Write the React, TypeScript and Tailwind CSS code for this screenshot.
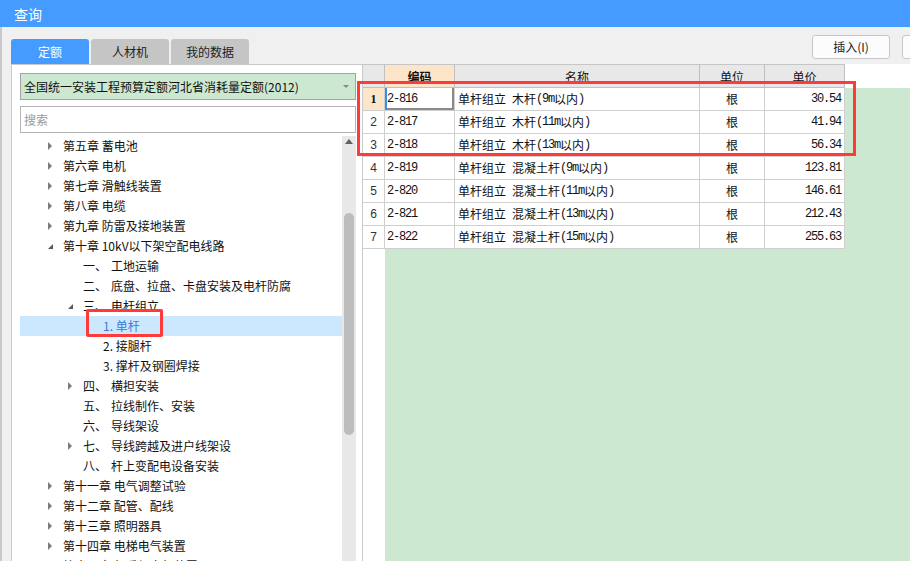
import React from "react";

type Node = { lvl: 0 | 1 | 2; arrow?: "r" | "d"; num?: string; text: string; sel?: boolean };

const tree: Node[] = [
  { lvl: 0, arrow: "r", text: "第五章 蓄电池" },
  { lvl: 0, arrow: "r", text: "第六章 电机" },
  { lvl: 0, arrow: "r", text: "第七章 滑触线装置" },
  { lvl: 0, arrow: "r", text: "第八章 电缆" },
  { lvl: 0, arrow: "r", text: "第九章 防雷及接地装置" },
  { lvl: 0, arrow: "d", text: "第十章 10kV以下架空配电线路" },
  { lvl: 1, num: "一、", text: "工地运输" },
  { lvl: 1, num: "二、", text: "底盘、拉盘、卡盘安装及电杆防腐" },
  { lvl: 1, arrow: "d", num: "三、", text: "电杆组立" },
  { lvl: 2, text: "1. 单杆", sel: true },
  { lvl: 2, text: "2. 接腿杆" },
  { lvl: 2, text: "3. 撑杆及钢圈焊接" },
  { lvl: 1, arrow: "r", num: "四、", text: "横担安装" },
  { lvl: 1, num: "五、", text: "拉线制作、安装" },
  { lvl: 1, num: "六、", text: "导线架设" },
  { lvl: 1, arrow: "r", num: "七、", text: "导线跨越及进户线架设" },
  { lvl: 1, num: "八、", text: "杆上变配电设备安装" },
  { lvl: 0, arrow: "r", text: "第十一章 电气调整试验" },
  { lvl: 0, arrow: "r", text: "第十二章 配管、配线" },
  { lvl: 0, arrow: "r", text: "第十三章 照明器具" },
  { lvl: 0, arrow: "r", text: "第十四章 电梯电气装置" },
  { lvl: 0, arrow: "r", text: "第十五章 起重机电气装置" },
];

const indent: Record<number, string> = { 0: "pl-[28px]", 1: "pl-[48px]", 2: "pl-[68px]" };

const rows = [
  { code: "2-816", name: "单杆组立 木杆(9m以内)", unit: "根", price: "30.54" },
  { code: "2-817", name: "单杆组立 木杆(11m以内)", unit: "根", price: "41.94" },
  { code: "2-818", name: "单杆组立 木杆(13m以内)", unit: "根", price: "56.34" },
  { code: "2-819", name: "单杆组立 混凝土杆(9m以内)", unit: "根", price: "123.81" },
  { code: "2-820", name: "单杆组立 混凝土杆(11m以内)", unit: "根", price: "146.61" },
  { code: "2-821", name: "单杆组立 混凝土杆(13m以内)", unit: "根", price: "212.43" },
  { code: "2-822", name: "单杆组立 混凝土杆(15m以内)", unit: "根", price: "255.63" },
];

function Mixed({ text }: { text: string }) {
  const parts = text.split(/([\u3400-\u9fff]+)/).filter(Boolean);
  return (
    <>
      {parts.map((p, i) =>
        /[\u3400-\u9fff]/.test(p) ? (
          <span key={i} className="text-[12px] font-['Noto_Sans_CJK_SC',sans-serif]">
            {p}
          </span>
        ) : (
          <span key={i} className="text-[12px] tracking-[-1.2px] font-['Liberation_Mono',monospace] whitespace-pre">
            {p}
          </span>
        )
      )}
    </>
  );
}

function Arrow({ kind }: { kind?: "r" | "d" }) {
  if (kind === "r")
    return (
      <svg width="5" height="8" viewBox="0 0 5 8" className="block">
        <polygon points="0,0 4,4 0,8" fill="#7c7c7c" />
      </svg>
    );
  if (kind === "d")
    return (
      <svg width="6" height="6" viewBox="0 0 6 6" className="block mt-[2px]">
        <polygon points="5,0 5,5 0,5" fill="#595959" />
      </svg>
    );
  return null;
}

export default function App() {
  return (
    <div className="relative w-[910px] h-[561px] overflow-hidden bg-[#f0f0f0] flex flex-col font-['Noto_Sans_CJK_SC',sans-serif] text-[12px] text-[#111]">
      {/* title bar */}
      <div className="h-[27px] shrink-0 bg-[#459bff] text-white text-[14px] flex items-center pl-[14px] leading-none">
        查询
      </div>

      <div className="flex-1 flex flex-col border-l-2 border-l-[#c9c9c9] pl-[9px] min-h-0">
        {/* top row: tabs + buttons */}
        <div className="h-[37px] shrink-0 flex items-start">
          <div className="mt-[12px] flex gap-[2px] h-[25px]">
            <div className="w-[78px] h-full rounded-t-[3px] bg-[#459bff] text-white text-[12px] flex items-center justify-center">
              定额
            </div>
            <div className="w-[78px] h-full rounded-t-[3px] bg-[#c5c5c5] text-[#222] text-[12px] flex items-center justify-center">
              人材机
            </div>
            <div className="w-[78px] h-full rounded-t-[3px] bg-[#c5c5c5] text-[#222] text-[12px] flex items-center justify-center">
              我的数据
            </div>
          </div>
          <div className="ml-auto mr-[-70px] mt-[8px] flex gap-[12px] shrink-0">
            <div className="w-[78px] h-[24px] rounded-[3px] border border-[#c6c6c6] bg-[#fcfcfc] text-[12px] text-[#222] flex items-center justify-center">
              插入(I)
            </div>
            <div className="w-[78px] h-[24px] rounded-[3px] border border-[#c6c6c6] bg-[#fcfcfc]" />
          </div>
        </div>

        {/* main */}
        <div className="flex-1 flex min-h-0">
          {/* left panel */}
          <div className="w-[352px] shrink-0 bg-white border-l border-t border-r border-[#cacaca] flex flex-col pt-[8px] pl-[8px] min-h-0">
            <div className="w-[336px] h-[27px] shrink-0 border border-[#a3a3a3] bg-[#cde8d0] flex items-center pl-[3px] pr-[6px] text-[12px] text-[#111]">
              <span className="flex-1">全国统一安装工程预算定额河北省消耗量定额(2012)</span>
              <svg width="6" height="4" viewBox="0 0 6 4">
                <polygon points="0,0 6,0 3,3" fill="#8a8a8a" />
              </svg>
            </div>
            <div className="mt-[6px] w-[336px] h-[27px] shrink-0 border border-[#b4b4b4] bg-white flex items-center pl-[3px] text-[12px] text-[#9a9a9a]">
              搜索
            </div>
            <div className="mt-[3px] flex-1 flex w-[336px] min-h-0">
              <div className="w-[322px] overflow-hidden">
                {tree.map((n, i) => (
                  <div
                    key={i}
                    className={`h-[20px] flex items-center whitespace-nowrap ${indent[n.lvl]} ${
                      n.sel ? "bg-[#cce8ff] text-[#3b7ad6]" : "text-[#111]"
                    }`}
                  >
                    <div className="w-[15px] shrink-0 flex items-center">
                      <Arrow kind={n.arrow} />
                    </div>
                    {n.num ? (
                      <>
                        <span>{n.num}</span>
                        <span className="ml-[4px]">{n.text}</span>
                      </>
                    ) : (
                      <span>{n.text}</span>
                    )}
                  </div>
                ))}
              </div>
              <div className="w-[14px] bg-[#e8e8e8] flex flex-col items-center pt-[3px]">
                <svg width="8" height="5" viewBox="0 0 8 5">
                  <polygon points="0,5 4,0 8,5" fill="#606060" />
                </svg>
                <div className="mt-[69px] w-[10px] h-[222px] rounded-full bg-[#bdbdbd]" />
              </div>
            </div>
          </div>

          {/* right panel: grid */}
          <div className="flex-1 flex flex-col bg-white min-h-0">
            <div className="flex h-[24px] shrink-0">
              <div className="w-[482px] flex border-t border-[#c6c6c6] bg-[#e8e8e8]">
                <div className="w-[22px] border-r border-b border-[#c0c0c0]" />
                <div className="w-[70px] border-r border-b border-[#c0c0c0] bg-[#fde5c9] flex items-center justify-center pt-[2px] font-bold text-[12px]">
                  编码
                </div>
                <div className="w-[245px] border-r border-b border-[#c0c0c0] flex items-center justify-center pt-[2px]">
                  名称
                </div>
                <div className="w-[65px] border-r border-b border-[#c0c0c0] flex items-center justify-center pt-[2px]">
                  单位
                </div>
                <div className="w-[80px] border-r border-b border-[#c0c0c0] flex items-center justify-center pt-[2px]">
                  单价
                </div>
              </div>
            </div>
            <div className="flex-1 flex min-h-0">
              <div className="w-[22px] shrink-0 flex flex-col bg-white">
                {rows.map((r, i) => (
                  <div
                    key={r.code}
                    className={`h-[23px] border-r border-b border-[#cfcfcf] flex items-center justify-center text-[12px] ${
                      i === 0 ? "bg-[#fde5c9] font-bold text-[#111] font-['Liberation_Serif',serif]" : "text-[#333] font-['Liberation_Sans',sans-serif]"
                    }`}
                  >
                    {i + 1}
                  </div>
                ))}
              </div>
              <div className="flex-1 bg-[#cde8d0]">
                {rows.map((r, i) => (
                  <div key={r.code} className="w-[460px] h-[23px] flex bg-white text-[#111]">
                    <div
                      className={`w-[70px] h-full border-r border-b border-[#cfcfcf] flex items-center pl-[2px] ${
                        i === 0 ? "shadow-[inset_2px_0_0_#3a8ee6,inset_-2px_-2px_0_#8a8a8a]" : ""
                      }`}
                    >
                      <Mixed text={r.code} />
                    </div>
                    <div className="w-[245px] h-full border-r border-b border-[#cfcfcf] flex items-center pl-[3px] whitespace-nowrap">
                      <Mixed text={r.name} />
                    </div>
                    <div className="w-[65px] h-full border-r border-b border-[#cfcfcf] flex items-center justify-center">
                      <Mixed text={r.unit} />
                    </div>
                    <div className="w-[80px] h-full border-r border-b border-[#cfcfcf] flex items-center justify-end pr-[3px]">
                      <Mixed text={r.price} />
                    </div>
                  </div>
                ))}
              </div>
            </div>
          </div>
        </div>
      </div>

      {/* annotation boxes */}
      <div className="absolute left-[357px] top-[81px] w-[499px] h-[75px] border-[3px] border-[#ff3a3a] pointer-events-none" />
      <div className="absolute left-[86px] top-[309px] w-[77px] h-[28px] border-[3px] border-[#ff3a3a] rounded-[2px] pointer-events-none" />
    </div>
  );
}
